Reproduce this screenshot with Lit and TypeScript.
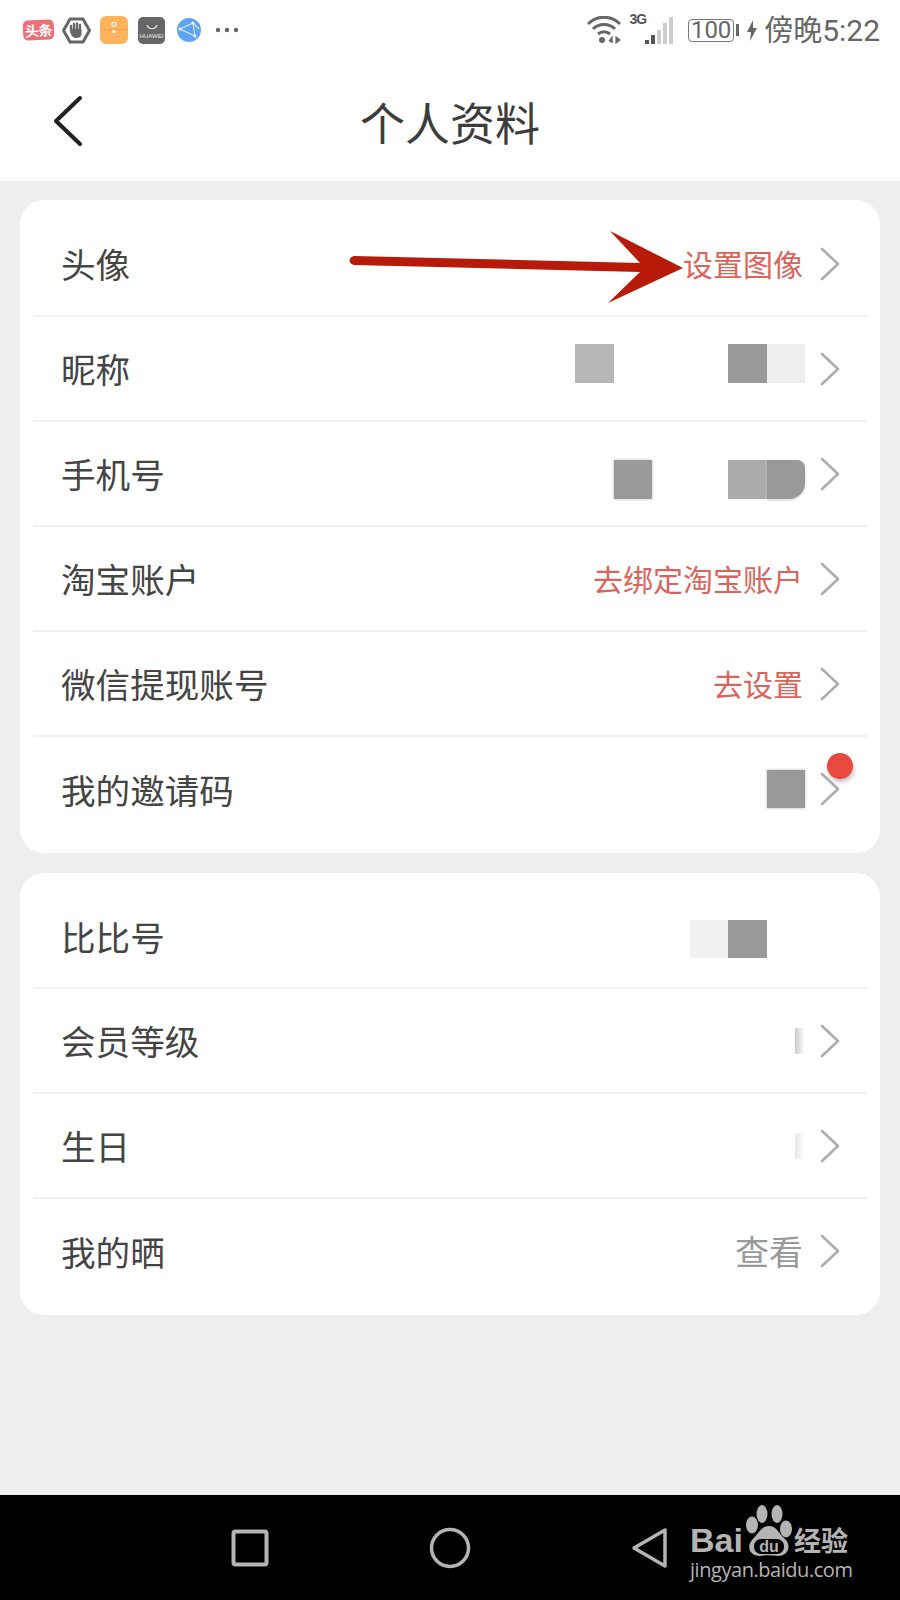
import { LitElement, html, css, svg } from "lit";
import { customElement } from "lit/decorators.js";

type Row = { label: string; text?: string; tone?: string; tiles?: string[]; fade?: string; noChevron?: boolean; badge?: boolean; tilesClass?: string };

const card1: Row[] = [
  { label: "头像", text: "设置图像", tone: "red" },
  { label: "昵称", tiles: ["b", "", "", "", "d", "e"], tilesClass: "up" },
  { label: "手机号", tiles: ["d soft", "", "", "c", "d round"], tilesClass: "down" },
  { label: "淘宝账户", text: "去绑定淘宝账户", tone: "red" },
  { label: "微信提现账号", text: "去设置", tone: "red" },
  { label: "我的邀请码", tiles: ["d soft"], badge: true },
];
const card2: Row[] = [
  { label: "比比号", tiles: ["f", "d", ""], noChevron: true, tilesClass: "down-s" },
  { label: "会员等级", fade: "dark" },
  { label: "生日", fade: "light" },
  { label: "我的晒", text: "查看", tone: "gray" },
];

const chevron = svg`<path d="M2 2 L18 17 L2 32" fill="none" stroke="#adadad" stroke-width="2.6" stroke-linecap="round" stroke-linejoin="round"/>`;

@customElement("app-root")
export class AppRoot extends LitElement {
  static styles = css`
    :host { display: flex; flex-direction: column; width: 900px; height: 1600px; position: relative; overflow: hidden; background: #eee; font-family: "Noto Sans CJK SC", "Noto Sans", sans-serif; color: #444; }
    .top { background: #fff; height: 181px; flex: none; display: flex; flex-direction: column; }
    .status { height: 60px; display: flex; align-items: center; padding: 0 20px 0 23px; box-sizing: border-box; color: #666; }
    .status-left { display: flex; align-items: center; }
    .status-right { margin-left: auto; display: flex; align-items: center; }
    .toutiao { width: 31px; height: 20px; border-radius: 5px; background: #ec6f78; color: #fff; font-size: 14px; font-weight: 700; line-height: 20px; text-align: center; letter-spacing: -0.5px; margin-right: 8px; transform: rotate(-3deg); white-space: nowrap; }
    .huawei { width: 27px; height: 27px; border-radius: 5px; background: #666; color: #eee; font: 6px/1 "Liberation Sans", sans-serif; display: flex; flex-direction: column; align-items: center; justify-content: flex-end; padding-bottom: 5px; box-sizing: border-box; margin-right: 12px; }
    .huawei svg { margin-bottom: 3px; }
    .time { font-size: 29px; line-height: 1; color: #666; margin-left: 7px; white-space: nowrap; }
    .time b { font-family: Roboto, sans-serif; font-weight: 400; font-size: 30px; }
    .batt { width: 46px; height: 23px; border: 1.5px solid #777; border-radius: 4px; box-sizing: border-box; font: 24px/20px Roboto, sans-serif; color: #666; text-align: center; margin-left: 13px; white-space: nowrap; }
    .nub { width: 3px; height: 12px; background: #666; margin: 0 8px 0 2px; }
    .sig { display: flex; align-items: flex-start; margin-left: 8px; }
    .sig-text { font: 700 14px/14px "Liberation Sans Narrow", "Liberation Sans", sans-serif; color: #555; margin: -3px -1px 0 0; letter-spacing: -1px; }
    .bar { height: 121px; display: flex; align-items: center; padding: 0 0 0 53px; position: relative; box-sizing: border-box; }
    .title { position: absolute; left: 0; right: 0; text-align: center; font-size: 45px; line-height: 1; color: #3c3c3c; top: 39px; }
    .content { flex: 1; padding: 19px 20px 0; display: flex; flex-direction: column; gap: 20px; }
    .card { background: #fff; border-radius: 24px; padding: 12px 13px 12px; }
    .row { height: 103px; border-bottom: 2px solid #f1f1f1; display: flex; align-items: center; padding: 0 27px 0 28px; position: relative; }
    .row:last-child { border-bottom: none; height: 104px; }
    .card + .card .row:first-child { height: 102px; }
    .label { font-size: 34.6px; line-height: 1; color: #444; }
    .value { margin-left: auto; display: flex; align-items: center; }
    .text { font-size: 30px; line-height: 1; margin: 0 2px 1px 0; white-space: nowrap; }
    .text.red { color: #d9645b; }
    .text.gray { color: #999; font-size: 34px; }
    .tiles { display: flex; }
    .tiles.up { margin-bottom: 10px; }
    .tiles.down { margin-top: 12px; }
    .tiles.down-s { margin-top: 6px; }
    .tile { width: 38.3px; height: 38.3px; }
    .tile.b { background: #b7b7b7; }
    .tile.c { background: #ababab; }
    .tile.d { background: #999; }
    .tile.e { background: #efefef; }
    .tile.f { background: #f1f1f1; }
    .tile.soft { box-shadow: 0 0 3px #bbb; }
    .tile.round { border-radius: 0 8px 16px 0; box-shadow: 0 1px 3px #ccc; }
    .fade { width: 10px; height: 26px; }
    .fade.dark { background: linear-gradient(90deg, #ccc, #fff); }
    .fade.light { background: linear-gradient(90deg, #e6e6e6, #fff); }
    .chev { flex: none; width: 20px; height: 34px; margin-left: 15px; display: block; }
    .chev.none { visibility: hidden; }
    .badge { position: absolute; left: 794px; top: 16px; width: 26px; height: 26px; border-radius: 50%; background: #e8483d; box-shadow: 1px 3px 4px rgba(0,0,0,.25); }
    .fade + .chev { margin-left: 5px; }
    .nav { height: 105px; flex: none; background: #000; padding-left: 150px; display: grid; grid-template-columns: repeat(3, 200px); align-items: center; justify-items: center; position: relative; }
    .arrow { position: absolute; left: 340px; top: 225px; }
    .logo { position: absolute; left: 690px; top: 1495px; width: 170px; height: 105px; color: #b4b4b4; }
    .bai { position: absolute; left: 0; top: 28px; font: 700 34px/1 "Liberation Sans", sans-serif; }
    .jy { position: absolute; left: 104px; top: 31px; font-size: 27px; line-height: 1; font-weight: 700; white-space: nowrap; }
    .url { position: absolute; left: 0; top: 65px; font: 20px/1 "Open Sans", "Liberation Sans", sans-serif; white-space: nowrap; letter-spacing: -0.45px; }
    .paw { position: absolute; left: 55px; top: 9px; }
    .du { font: 700 16px "Liberation Sans", sans-serif; }
  `;

  private statusLeft() {
    return html`<div class="status-left">
      <div class="toutiao">头条</div>
      <svg width="29" height="27" viewBox="0 0 29 27" style="margin-right:9px"><path d="M8 2 H21 L27.5 13.5 L21 25 H8 L1.5 13.5 Z" fill="none" stroke="#666" stroke-width="3" stroke-linejoin="round"/><path d="M9 13 V9 M12 13 V7 M15 13 V6.5 M18 13 V8 " stroke="#666" stroke-width="2.4" stroke-linecap="round"/><path d="M8 12 H19.5 V17 C19 20 17 21 14 21 C11 21 9.5 19 8 15 Z" fill="#666"/></svg>
      <svg width="28" height="28" viewBox="0 0 27 27" style="margin-right:10px"><rect width="27" height="27" rx="6" fill="#fdb35c"/><path d="M0 13 H27" stroke="#f6a54c" stroke-width="1"/><circle cx="13.5" cy="8" r="2" fill="none" stroke="#fff" stroke-width="1"/><circle cx="13.5" cy="15" r="1.6" fill="#fff"/></svg>
      <div class="huawei"><svg width="12" height="6" viewBox="0 0 12 6"><path d="M1 1 C3 6 9 6 11 1" fill="none" stroke="#eee" stroke-width="1.2"/></svg>HUAWEI</div>
      <svg width="24" height="24" viewBox="0 0 24 24" style="margin-right:14px"><circle cx="12" cy="12" r="12" fill="#5da5f2"/><path d="M3 11 L16 5 L18 18 Z M16 5 L22 11" fill="none" stroke="#d9e9fb" stroke-width="1.1"/><circle cx="3" cy="11" r="1.6" fill="#e6f1fd"/><circle cx="16" cy="5" r="1.6" fill="#e6f1fd"/><circle cx="18" cy="18" r="1.6" fill="#e6f1fd"/></svg>
      <svg width="24" height="6" viewBox="0 0 24 6"><circle cx="3" cy="3" r="2.2" fill="#666"/><circle cx="12" cy="3" r="2.2" fill="#666"/><circle cx="21" cy="3" r="2.2" fill="#666"/></svg>
    </div>`;
  }

  private statusRight() {
    return html`<div class="status-right">
      <svg width="34" height="28" viewBox="0 0 34 28"><path d="M1 8 C10 -1 24 -1 33 8" fill="none" stroke="#666" stroke-width="3"/><path d="M6 13 C12 7 22 7 28 13" fill="none" stroke="#666" stroke-width="3"/><path d="M11 18 C14.500 15 19.500 15 23 18" fill="none" stroke="#666" stroke-width="3"/><circle cx="15" cy="24" r="3" fill="#666"/><path d="M22 25 L25 21 V27 M22 25 H26 M29 21 V27 L33 24 Z" fill="#666" stroke="#666" stroke-width="1.2"/></svg>
      <div class="sig"><span class="sig-text">3G</span>
        <svg width="30" height="30" viewBox="0 0 30 30"><rect x="0" y="25" width="4" height="4" fill="#555"/><rect x="6" y="20" width="4" height="9" fill="#555"/><rect x="12" y="15" width="4" height="14" fill="#ccc"/><rect x="18" y="8" width="4" height="21" fill="#ccc"/><rect x="24" y="2" width="4" height="27" fill="#ccc"/></svg>
      </div>
      <div class="batt">100</div><div class="nub"></div>
      <svg width="10" height="21" viewBox="0 0 10 21"><path d="M6 0 L0 12 H4 L3 21 L10 8 H6 Z" fill="#666"/></svg>
      <div class="time">傍晚<b>5:22</b></div>
    </div>`;
  }

  private row(r: Row) {
    return html`<div class="row">
      <div class="label">${r.label}</div>
      <div class="value">
        ${r.text ? html`<span class="text ${r.tone}">${r.text}</span>` : ""}
        ${r.tiles ? html`<div class="tiles ${r.tilesClass ?? ""}">${r.tiles.map((t) => html`<div class="tile ${t}"></div>`)}</div>` : ""}
        ${r.fade ? html`<div class="fade ${r.fade}"></div>` : ""}
      </div>
      <svg class="chev ${r.noChevron ? "none" : ""}" viewBox="0 0 20 34">${chevron}</svg>
      ${r.badge ? html`<div class="badge"></div>` : ""}
    </div>`;
  }

  render() {
    return html`
      <div class="top">
        <div class="status">${this.statusLeft()}${this.statusRight()}</div>
        <div class="bar">
          <svg width="30" height="52" viewBox="0 0 30 52"><path d="M27 3 L3 26 L27 49" fill="none" stroke="#222" stroke-width="4" stroke-linecap="round" stroke-linejoin="round"/></svg>
          <div class="title">个人资料</div>
        </div>
      </div>
      <div class="content">
        <div class="card">${card1.map((r) => this.row(r))}</div>
        <div class="card">${card2.map((r) => this.row(r))}</div>
      </div>
      <div class="nav">
        <svg width="38" height="38" viewBox="0 0 38 38"><rect x="2.500" y="2.500" width="33" height="33" rx="2" fill="none" stroke="#b4b4b4" stroke-width="4"/></svg>
        <svg width="42" height="42" viewBox="0 0 42 42"><circle cx="21" cy="21" r="18.500" fill="none" stroke="#b4b4b4" stroke-width="3.500"/></svg>
        <svg width="38" height="42" viewBox="0 0 38 42"><path d="M34 3 V39 L3 21 Z" fill="none" stroke="#b4b4b4" stroke-width="3.500" stroke-linejoin="round"/></svg>
      </div>
      <svg class="arrow" width="350" height="85" viewBox="340 225 350 85"><path d="M354 256 L640 263 L610 231 L683 268 L608 303 L640 272 L354 265 C348 264 348 257 354 256 Z" fill="#b81a0a"/></svg>
      <div class="logo">
        <span class="bai">Bai</span>
        <svg class="paw" width="50" height="54" viewBox="745 1503 50 54">
          <g fill="#b4b4b4">
            <ellipse cx="762" cy="1513" rx="5.500" ry="9"/><ellipse cx="777" cy="1513" rx="5.500" ry="9"/><ellipse cx="752" cy="1524" rx="6" ry="8.500"/><ellipse cx="786" cy="1528" rx="6" ry="8.500"/>
            <path d="M769 1525 C777 1525 778 1532 785 1538 C792 1545 788 1555 778 1555 C772 1554 766 1554 760 1555 C750 1555 746 1546 752 1539 C759 1532 761 1525 769 1525 Z"/>
          </g>
          <rect x="754" y="1538" width="30" height="15" rx="7" fill="#000"/>
          <text x="769" y="1551" text-anchor="middle" fill="#b4b4b4" class="du">du</text>
        </svg>
        <span class="jy">经验</span>
        <span class="url">jingyan.baidu.com</span>
      </div>
    `;
  }
}
